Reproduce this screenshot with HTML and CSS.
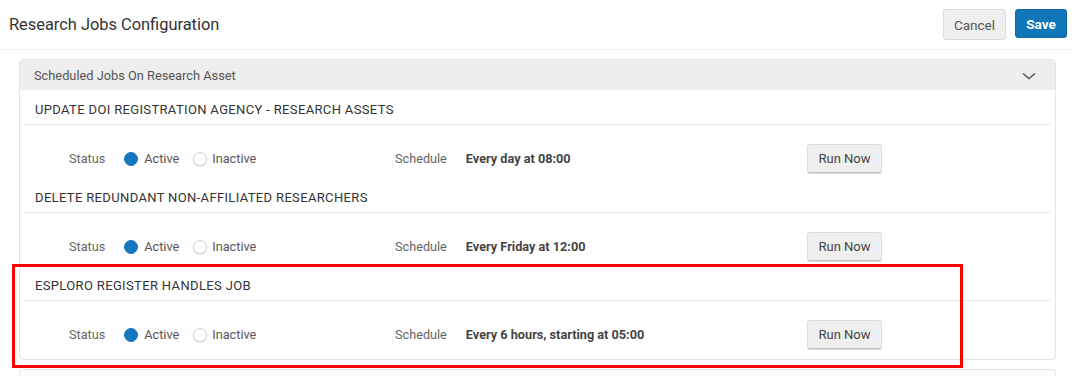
FILE: index.html
```html
<!DOCTYPE html>
<html>

<head>
    <title>Research Jobs Configuration</title>
    <meta http-equiv="Content-Type" content="text/html;charset=UTF-8">
    <meta name="viewport" content="width=device-width, initial-scale=1.0">
    <link rel="stylesheet" href="styles.css">
</head>

<body>
    <div class="page-header">
        <h1>Research Jobs Configuration</h1>
        <div class="actions">
            <button class="btn btn-cancel">Cancel</button>
            <button class="btn btn-save">Save</button>
        </div>
    </div>

    <div class="content">
        <div class="panel">
            <div class="panel-header">
                <span>Scheduled Jobs On Research Asset</span>
                <svg class="chevron" width="14" height="8" viewBox="0 0 14 8">
                    <path d="M1 1.5 L7 6.5 L13 1.5" fill="none" stroke="#555" stroke-width="1.4"/>
                </svg>
            </div>
            <div class="panel-body">
                <div class="job">
                    <div class="job-title">Update DOI Registration Agency - Research Assets</div>
                    <div class="job-row">
                        <div class="field">
                            <span class="label">Status</span>
                            <label class="radio"><span class="dot checked"></span>Active</label>
                            <label class="radio"><span class="dot"></span>Inactive</label>
                        </div>
                        <div class="field">
                            <span class="label">Schedule</span>
                            <span class="value">Every day at 08:00</span>
                        </div>
                        <button class="btn btn-run">Run Now</button>
                    </div>
                </div>
                <div class="job">
                    <div class="job-title">Delete Redundant Non-Affiliated Researchers</div>
                    <div class="job-row">
                        <div class="field">
                            <span class="label">Status</span>
                            <label class="radio"><span class="dot checked"></span>Active</label>
                            <label class="radio"><span class="dot"></span>Inactive</label>
                        </div>
                        <div class="field">
                            <span class="label">Schedule</span>
                            <span class="value">Every Friday at 12:00</span>
                        </div>
                        <button class="btn btn-run">Run Now</button>
                    </div>
                </div>
                <div class="job">
                    <div class="job-title">Esploro Register Handles Job</div>
                    <div class="job-row">
                        <div class="field">
                            <span class="label">Status</span>
                            <label class="radio"><span class="dot checked"></span>Active</label>
                            <label class="radio"><span class="dot"></span>Inactive</label>
                        </div>
                        <div class="field">
                            <span class="label">Schedule</span>
                            <span class="value">Every 6 hours, starting at 05:00</span>
                        </div>
                        <button class="btn btn-run">Run Now</button>
                    </div>
                </div>
            </div>
        </div>
        <div class="panel panel-next"></div>
    </div>

    <div class="highlight"></div>
</body>

</html>
```

FILE: styles.css
```css
* {
    box-sizing: border-box;
}

html,
body {
    height: 376px;
}

body {
    font-family: Roboto, "Liberation Sans", Arial, sans-serif;
    margin: 0;
    background-color: #fff;
    color: #333;
    position: relative;
    overflow: hidden;
}

.page-header {
    display: flex;
    align-items: flex-start;
    justify-content: space-between;
    height: 50px;
    padding: 9px 5px 0 9px;
    border-bottom: 1px solid #f0f0f0;
}

.page-header h1 {
    margin: 5px 0 0;
    font-size: 16.4px;
    font-weight: normal;
    color: #333;
    line-height: 21px;
}

.actions {
    display: flex;
    align-items: flex-start;
    gap: 9px;
}

.btn {
    font-family: inherit;
    border-radius: 3px;
    cursor: pointer;
}

.btn-cancel {
    width: 63px;
    height: 31px;
    font-size: 13.5px;
    color: #555;
    background-color: #efefef;
    border: 1px solid #d9d9d9;
}

.btn-save {
    width: 52px;
    height: 29px;
    font-size: 13.5px;
    font-weight: bold;
    color: #fff;
    background-color: #1076b9;
    border: 1px solid #0e6aa6;
}

.content {
    padding: 9px 16px 0 19px;
}

.panel {
    border: 1px solid #e4e4e4;
    border-radius: 4px;
    background-color: #fff;
}

.panel-header {
    display: flex;
    align-items: center;
    justify-content: space-between;
    height: 30px;
    padding: 0 19px 0 14px;
    background-color: #eeeeee;
    font-size: 12.8px;
    color: #555;
}

.chevron {
    margin-top: 2px;
}

.panel-body {
    padding: 5px 4px 0;
}

.job-title {
    height: 30px;
    line-height: 29px;
    padding-left: 11px;
    border-bottom: 1px solid #eaeaea;
    font-size: 13px;
    text-transform: uppercase;
    letter-spacing: 0.35px;
    color: #333;
}

.job-row {
    display: grid;
    grid-template-columns: 326px 412px 75px;
    align-items: center;
    height: 58px;
    padding: 19px 0 10px 45px;
    font-size: 12.7px;
}

.field {
    display: flex;
    align-items: center;
}

.label {
    color: #666;
    margin-right: 19px;
}

.radio {
    display: flex;
    align-items: center;
    color: #555;
    margin-right: 14px;
}

.dot {
    width: 14px;
    height: 14px;
    border-radius: 50%;
    margin-right: 6px;
    background-color: #fff;
    border: 1px solid #d2d2d2;
    box-shadow: 0 1px 1px rgba(0, 0, 0, 0.12);
}

.dot.checked {
    background-color: #1476bb;
    border-color: #1476bb;
    box-shadow: none;
}

.radio + .radio .dot {
    margin-right: 5px;
}

.value {
    font-weight: bold;
    color: #444;
}

.btn-run {
    width: 75px;
    height: 29px;
    font-size: 13px;
    color: #444;
    background-color: #efefef;
    border: 1px solid #dcdcdc;
    border-bottom-color: #c8c8c8;
    box-shadow: 0 1px 0 #d6d6d6;
}

.panel-next {
    margin-top: 9px;
    height: 30px;
    background-color: #fcfcfc;
}

.highlight {
    position: absolute;
    left: 12px;
    top: 264px;
    width: 951px;
    height: 104px;
    border: 3px solid #ff0000;
    pointer-events: none;
}
```
